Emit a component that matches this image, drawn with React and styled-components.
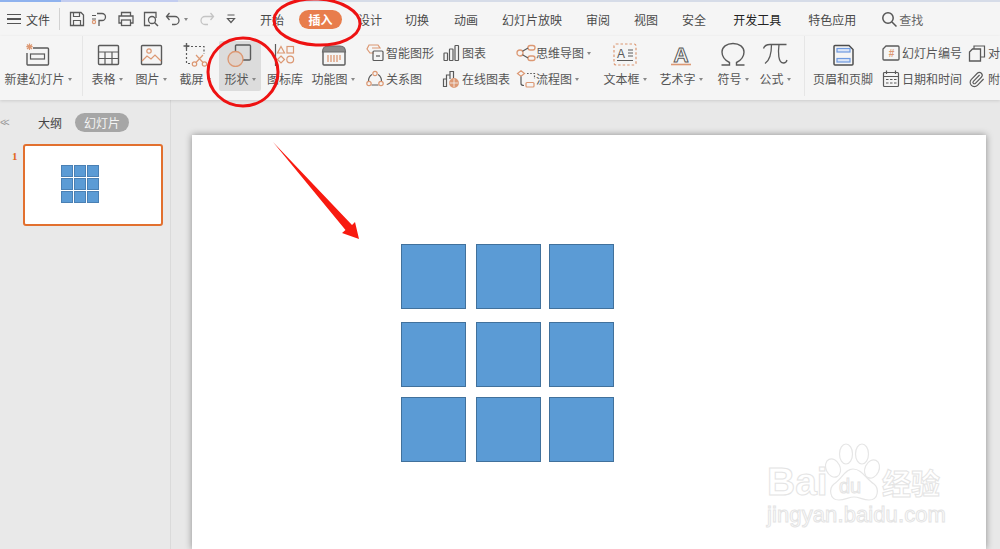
import React from 'react'
import styled, { createGlobalStyle } from 'styled-components'
import { Paperclip } from 'lucide-react'

const G = '#5a5a5a'
const O = '#dc9873'

const GlobalStyle = createGlobalStyle`
  html, body { margin: 0; padding: 0; height: 100%; overflow: hidden; }
  body { font-family: "Noto Sans CJK SC", "Liberation Sans", sans-serif; background: #e8e8e8; }
`

function Svg({ w = 28, h = 24, children }) {
  return (
    <svg width={w} height={h} viewBox={`0 0 ${w} ${h}`} fill="none" stroke={G} strokeWidth="1.2">
      {children}
    </svg>
  )
}

const icons = {
  newSlide: (
    <Svg>
      <path d="M9 5H23.5a1 1 0 0 1 1 1V21a1 1 0 0 1-1 1H4a1 1 0 0 1-1-1V10" strokeWidth="1.4" />
      <rect x="6.5" y="11" width="14" height="5" />
      <path d="M5.5 0.5V7M2.3 3.7H8.7M3 1.5L8 6M8 1.5L3 6" stroke={O} />
    </Svg>
  ),
  table: (
    <Svg>
      <rect x="5.5" y="2.5" width="20" height="19" rx="1" strokeWidth="1.4" />
      <path d="M5.5 9H25.5M5.5 15.5H25.5M12 9V21.5M19 9V21.5" />
    </Svg>
  ),
  picture: (
    <Svg>
      <rect x="4.5" y="2.5" width="20" height="19" rx="1" strokeWidth="1.4" />
      <circle cx="12" cy="8" r="2.2" stroke={O} />
      <path d="M5 18L10 13L14 16L18 12L24 18" stroke={O} />
    </Svg>
  ),
  shot: (
    <Svg>
      <path d="M6 3.5H23V11M5.5 6V20.5H11" strokeDasharray="2 2" />
      <path d="M5.5 0V6M2.5 3H8.5" strokeWidth="1.4" />
      <circle cx="13.5" cy="21" r="2.2" stroke={O} />
      <circle cx="23.5" cy="21" r="2.2" stroke={O} />
      <path d="M15 19.5L22 12M22 19.5L15 12" stroke={O} />
    </Svg>
  ),
  shape: (
    <Svg>
      <path d="M9.5 8V3a1 1 0 0 1 1-1H23.5a1 1 0 0 1 1 1V16a1 1 0 0 1-1 1H17" strokeWidth="1.4" />
      <circle cx="9.5" cy="16" r="7.5" fill="#e0d2ca" stroke={O} strokeWidth="1.3" />
    </Svg>
  ),
  iconLib: (
    <Svg>
      <path d="M4.5 1V22.5H7" strokeWidth="1.2" />
      <path d="M10 3.5L13.5 10H6.5Z" stroke={O} />
      <rect x="16" y="3.5" width="6.5" height="6.5" stroke={O} />
      <path d="M10 13L13.5 16.5L10 20L6.5 16.5Z" stroke={O} />
      <circle cx="19.2" cy="16.5" r="3.4" stroke={O} />
    </Svg>
  ),
  funcChart: (
    <Svg>
      <path d="M4 9V21a1 1 0 0 0 1 1H25a1 1 0 0 0 1-1V9" strokeWidth="1.4" />
      <path d="M3.5 9C3.5 5 6 3 9 3H21C24 3 26.5 5 26.5 9Z" fill="#8a8a8a" stroke="#6a6a6a" />
      <path d="M9 12V19M12 12V19M15 12V19M18 12V19M21 12V17" stroke={O} strokeWidth="1.3" />
    </Svg>
  ),
  textBox: (
    <Svg w={24} h={24}>
      <rect x="1" y="1" width="22" height="21" rx="2" stroke={O} strokeDasharray="2.5 2" />
      <text x="4" y="15" fontSize="12" fontFamily="Liberation Sans" fill={G} stroke="none">A</text>
      <path d="M4 17.5H20M15 7H20M15 10H20M15 13H20" strokeWidth="1" />
    </Svg>
  ),
  art: (
    <Svg w={26} h={26}>
      <text x="13" y="20" textAnchor="middle" fontSize="21" fontFamily="Liberation Sans" fontWeight="700" fill="#fafafa" stroke={G} strokeWidth="1">A</text>
      <path d="M3 22.5H23" stroke={O} strokeWidth="1.6" />
    </Svg>
  ),
  omega: (
    <Svg w={26} h={26}>
      <path d="M1.5 23H9.5V20.5C4.5 18 2 14 2 10C2 5 6.5 1.5 13 1.5C19.5 1.5 24 5 24 10C24 14 21.5 18 16.5 20.5V23H24.5" strokeWidth="1.4" />
    </Svg>
  ),
  pi: (
    <Svg w={26} h={26}>
      <path d="M1.5 6.5C2.5 3.5 5 2.5 8 2.5H24.5M9.5 2.5C9.5 10 8.5 18 3 21.5M17 2.5C16 10 16 21 21.5 21C23.5 21 24.5 20 25 18" strokeWidth="1.3" />
    </Svg>
  ),
  headerFooter: (
    <Svg>
      <path d="M6 2.5H20L24 6.5V21a1 1 0 0 1-1 1H6a1 1 0 0 1-1-1V3.5a1 1 0 0 1 1-1Z" strokeWidth="1.5" stroke="#4d4d4d" />
      <rect x="8" y="5.5" width="13" height="3.5" stroke="#6e9ae0" fill="#dce6f7" />
      <rect x="8" y="15.5" width="13" height="3.5" stroke="#6e9ae0" fill="#dce6f7" />
    </Svg>
  ),
  smart: (
    <Svg w={18} h={18}>
      <path d="M8 9H4L1 5L3 1H12L14 4H6" stroke={O} />
      <rect x="7" y="7" width="10" height="9.5" rx="1" />
      <path d="M10 12H14" />
    </Svg>
  ),
  relation: (
    <Svg w={18} h={18}>
      <path d="M6 4.5C3.5 6 2.5 8.5 2.5 11M12 4.5C14.5 6 15.5 8.5 15.5 11M5.5 15H12.5" />
      <circle cx="9" cy="3.5" r="2.2" stroke={O} />
      <circle cx="3" cy="13.5" r="2.2" stroke={O} />
      <circle cx="15" cy="13.5" r="2.2" stroke={O} />
    </Svg>
  ),
  chart: (
    <Svg w={18} h={18}>
      <rect x="2" y="9" width="3.5" height="7.5" rx=".5" />
      <rect x="7.5" y="5" width="3.5" height="11.5" rx=".5" />
      <rect x="13" y="1.5" width="3.5" height="15" rx=".5" />
    </Svg>
  ),
  online: (
    <Svg w={18} h={18}>
      <path d="M1.5 16.5V9H4.5V16.5ZM4.5 16.5V5H8V9M8 5V1.5H11.5V8" />
      <circle cx="12" cy="13" r="4.3" fill={O} stroke={O} />
      <path d="M7.7 13H16.3M12 8.7V17.3" stroke="#f5f5f5" strokeWidth=".8" />
    </Svg>
  ),
  mind: (
    <Svg w={20} h={18}>
      <circle cx="4" cy="9" r="3" stroke={O} strokeWidth="1.3" />
      <rect x="12" y="1.5" width="7" height="4.5" rx="2.2" stroke={O} strokeWidth="1.3" />
      <rect x="12" y="12" width="7" height="4.5" rx="2.2" stroke={O} strokeWidth="1.3" />
      <path d="M6.5 7.2L12 4M6.5 10.8L12 14" />
    </Svg>
  ),
  flow: (
    <Svg w={20} h={18}>
      <path d="M5 0.8L8.5 3.5L5 6.2L1.5 3.5Z" stroke={O} strokeWidth="1.2" />
      <path d="M11 3.5H18.5V9" strokeDasharray="1.6 1.6" />
      <path d="M5 6.5V13.5C5 15 6 15.5 8 15.5" />
      <rect x="10" y="12.5" width="8" height="4.5" rx="1" stroke={O} strokeWidth="1.2" />
    </Svg>
  ),
  number: (
    <Svg w={18} h={18}>
      <path d="M4 2H16a1 1 0 0 1 1 1V15a1 1 0 0 1-1 1H2a1 1 0 0 1-1-1V5Z" strokeWidth="1.3" />
      <text x="9.5" y="13" textAnchor="middle" fontSize="10" fontFamily="Liberation Sans" fontWeight="700" fill={O} stroke="none">#</text>
    </Svg>
  ),
  calendar: (
    <Svg w={18} h={18}>
      <rect x="1.5" y="2.5" width="15" height="14" rx="1" />
      <path d="M1.5 6.5H16.5M4.5 0.5V4M13.5 0.5V4M4 9.5H6.5M8 9.5H10.5M12 9.5H14.5M4 13H6.5M8 13H10.5M12 13H14.5" />
    </Svg>
  ),
  copies: (
    <Svg w={18} h={18}>
      <path d="M6 5V2H16.5V13H12.5" />
      <path d="M1.5 8L4.5 5H12.5V17H1.5Z" strokeWidth="1.3" />
    </Svg>
  ),
}

const quick = [
  { ml: 9, el: <Svg w={16} h={16}><path d="M1.5 1.5H12L14.5 4V14.5H1.5Z" strokeWidth="1.3" /><path d="M4.5 1.5V5.5H10.5V1.5M4.5 14.5V9.5H11.5V14.5" /></Svg> },
  { ml: 6, el: <Svg w={16} h={16}><path d="M6 2.5H11A3.5 3.5 0 0 1 11 9.5H8V15" strokeWidth="1.3" /><path d="M1 4.5H5M1 8H5" /><circle cx="3" cy="11" r="1.6" stroke={O} /></Svg> },
  { ml: 11, el: <Svg w={16} h={16}><path d="M3.5 5V1.5H12.5V5M3.5 12H1V5H15V12H12.5" strokeWidth="1.3" /><rect x="3.5" y="9" width="9" height="5.5" strokeWidth="1.3" /></Svg> },
  { ml: 9, el: <Svg w={16} h={16}><path d="M13 7V1.5H1.5V14.5H7" strokeWidth="1.3" /><circle cx="9" cy="9" r="3.5" strokeWidth="1.3" /><path d="M11.5 11.5L15 15" strokeWidth="1.5" /></Svg> },
  { ml: 6, el: <Svg w={16} h={16}><path d="M4.5 2L1.5 5.5L4.5 9M2 5.5H10A4 4 0 0 1 10 13.5H7" strokeWidth="1.3" /></Svg>, caret: true },
  { ml: 11, el: <Svg w={16} h={16}><g stroke="#c4c4c4"><path d="M11.5 2L14.5 5.5L11.5 9M14 5.5H6A4 4 0 0 0 6 13.5H9" strokeWidth="1.3" /></g></Svg> },
  { ml: 8, el: <Svg w={16} h={16}><path d="M4.5 4H11.5M4.5 7.5H11.5L8 11.5Z" strokeWidth="1.2" /></Svg> },
]

const tabs = [
  { label: '开始', ml: 21 },
  { label: '插入', ml: 15, active: true },
  { label: '设计', ml: 16 },
  { label: '切换', ml: 23 },
  { label: '动画', ml: 25 },
  { label: '幻灯片放映', ml: 24 },
  { label: '审阅', ml: 24 },
  { label: '视图', ml: 24 },
  { label: '安全', ml: 24 },
  { label: '开发工具', ml: 27, strong: true },
  { label: '特色应用', ml: 27 },
]

const squares = [
  [209, 109], [284, 109], [357, 109],
  [209, 187], [284, 187], [357, 187],
  [209, 262], [284, 262], [357, 262],
]

function Big({ icon, label, w, ml, caret, hover }) {
  return (
    <BigButton $w={w} $ml={ml} $hover={hover}>
      <BigIcon>{icons[icon]}</BigIcon>
      <Label>{label}{caret && <Caret />}</Label>
    </BigButton>
  )
}

function Small({ icon, label, caret }) {
  return (
    <SmallRow>
      <SmallIcon>{icon}</SmallIcon>
      <Label>{label}{caret && <Caret />}</Label>
    </SmallRow>
  )
}

export default function App() {
  return (
    <Page>
      <GlobalStyle />
      <TopLine />
      <TabBar>
        <Burger><span /><span /><span /></Burger>
        <FileLabel>文件</FileLabel>
        <BarDivider />
        {quick.map((q, i) => (
          <QuickItem key={i} $ml={q.ml}>{q.el}{q.caret && <Caret />}</QuickItem>
        ))}
        {tabs.map(t => (
          <Tab key={t.label} $ml={t.ml} $active={t.active} $strong={t.strong}>{t.label}</Tab>
        ))}
        <Search>
          <svg width="17" height="17" viewBox="0 0 17 17" fill="none" stroke="#555" strokeWidth="1.5">
            <circle cx="7" cy="7" r="5.2" />
            <path d="M11 11L15.5 15.5" />
          </svg>
          查找
        </Search>
      </TabBar>

      <Ribbon>
        <Big icon="newSlide" label="新建幻灯片" w={76} caret />
        <RibbonDivider $ml={6} />
        <Big icon="table" label="表格" w={44} ml={2} caret />
        <Big icon="picture" label="图片" w={44} caret />
        <Big icon="shot" label="截屏" w={44} caret />
        <Big icon="shape" label="形状" w={42} ml={2} caret hover />
        <Big icon="iconLib" label="图标库" w={48} />
        <Big icon="funcChart" label="功能图" w={48} caret />
        <SmallCol $w={76} $ml={9}>
          <Small icon={icons.smart} label="智能图形" />
          <Small icon={icons.relation} label="关系图" />
        </SmallCol>
        <SmallCol $w={74}>
          <Small icon={icons.chart} label="图表" />
          <Small icon={icons.online} label="在线图表" />
        </SmallCol>
        <SmallCol $w={85}>
          <Small icon={icons.mind} label="思维导图" caret />
          <Small icon={icons.flow} label="流程图" caret />
        </SmallCol>
        <Big icon="textBox" label="文本框" w={48} caret />
        <Big icon="art" label="艺术字" w={64} caret />
        <Big icon="omega" label="符号" w={40} caret />
        <Big icon="pi" label="公式" w={44} caret />
        <RibbonDivider $ml={7} />
        <Big icon="headerFooter" label="页眉和页脚" w={76} />
        <SmallCol $w={86} $ml={1}>
          <Small icon={icons.number} label="幻灯片编号" />
          <Small icon={icons.calendar} label="日期和时间" />
        </SmallCol>
        <SmallCol $w={32}>
          <Small icon={icons.copies} label="对" />
          <Small icon={<Paperclip size={17} color={G} strokeWidth={1.6} />} label="附" />
        </SmallCol>
      </Ribbon>

      <Body>
        <Side>
          <SideTabs>
            <Collapse>&lt;&lt;</Collapse>
            <OutlineTab>大纲</OutlineTab>
            <SlidesTab>幻灯片</SlidesTab>
          </SideTabs>
          <ThumbRow>
            <ThumbNumber>1</ThumbNumber>
            <Thumb>
              <MiniGrid>
                {squares.map((_, i) => <MiniCell key={i} />)}
              </MiniGrid>
            </Thumb>
          </ThumbRow>
        </Side>
        <Canvas>
          <Slide>
            {squares.map(([x, y], i) => <Square key={i} $x={x} $y={y} />)}
          </Slide>
        </Canvas>
      </Body>

      <Watermark>
        <BrandRow>
          <Bai>Bai</Bai>
          <PawWrap>
            <svg width="60" height="62" viewBox="0 0 60 62" fill="#fff" stroke="#e6e6e6" strokeWidth="1.2">
              <ellipse cx="21" cy="12" rx="6.5" ry="10" />
              <ellipse cx="37" cy="12" rx="6.5" ry="10" />
              <ellipse cx="8" cy="26" rx="7" ry="9.5" transform="rotate(-25 8 26)" />
              <ellipse cx="47" cy="27" rx="7" ry="9.5" transform="rotate(25 47 27)" />
              <path d="M28 27C20 27 17 37 9 42C4 46 4 58 14 58C20 58 24 55 29 55C34 55 38 58 44 58C54 58 54 46 49 42C41 37 37 27 28 27Z" />
            </svg>
            <Du>du</Du>
          </PawWrap>
          <Jy>经验</Jy>
        </BrandRow>
        <WmUrl>jingyan.baidu.com</WmUrl>
      </Watermark>

      <Annotations viewBox="0 0 1000 549" fill="none">
        <ellipse cx="317" cy="22" rx="43" ry="23" stroke="#ee1212" strokeWidth="3" transform="rotate(3 317 22)" />
        <ellipse cx="243" cy="72" rx="35" ry="34" stroke="#ee1212" strokeWidth="3" />
        <polygon points="273,142 352,225 355,222 359,239 342,233 345.5,230" fill="#f81a10" />
      </Annotations>
    </Page>
  )
}

const Page = styled.div`
  position: relative;
  width: 1000px;
  height: 549px;
  display: flex;
  flex-direction: column;
  overflow: hidden;
  background: #e8e8e8;
`
const TopLine = styled.div`
  height: 2px;
  background: linear-gradient(to right, #8fb2ee 0, #8fb2ee 61px, #c3cdf0 61px, #c3cdf0 178px, #d6dce8 178px);
`
const TabBar = styled.div`
  height: 34px;
  display: flex;
  align-items: center;
  padding-left: 7px;
  background: #f5f5f5;
  color: #555;
  font-size: 12px;
`
const Burger = styled.div`
  width: 14px;
  display: flex;
  flex-direction: column;
  gap: 3px;
  span {
    height: 1.5px;
    background: #555;
  }
`
const FileLabel = styled.span`
  margin-left: 5px;
  width: 33px;
  color: #444;
`
const BarDivider = styled.div`
  width: 1px;
  height: 22px;
  background: #d2d2d2;
`
const QuickItem = styled.div`
  display: flex;
  align-items: center;
  gap: 3px;
  margin-left: ${p => p.$ml}px;
`
const Tab = styled.div`
  margin-left: ${p => p.$ml}px;
  width: ${p => (p.$active ? '43px' : 'auto')};
  height: ${p => (p.$active ? '19px' : 'auto')};
  line-height: 19px;
  text-align: center;
  border-radius: 10px;
  background: ${p => (p.$active ? '#e87d4c' : 'transparent')};
  color: ${p => (p.$active ? '#fff' : p.$strong ? '#222' : '#4a4a4a')};
  font-weight: ${p => (p.$active ? 700 : 400)};
`
const Search = styled.div`
  margin-left: 25px;
  display: flex;
  align-items: center;
  gap: 1px;
  color: #666;
`
const Ribbon = styled.div`
  height: 64px;
  flex: none;
  display: flex;
  background: #f5f5f5;
  box-shadow: 0 1px 3px rgba(0, 0, 0, 0.12);
  position: relative;
  z-index: 1;
`
const RibbonDivider = styled.div`
  width: 1px;
  height: 60px;
  margin-left: ${p => p.$ml}px;
  background: #e6e6e6;
`
const BigButton = styled.div`
  width: ${p => p.$w}px;
  margin-left: ${p => p.$ml || 0}px;
  height: 48px;
  margin-top: 5px;
  padding-top: 2px;
  display: flex;
  flex-direction: column;
  align-items: center;
  flex: none;
  background: ${p => (p.$hover ? '#dcdcdc' : 'transparent')};
  border-radius: 2px;
`
const BigIcon = styled.div`
  height: 24px;
  display: flex;
  align-items: center;
  margin-bottom: 4px;
`
const Label = styled.div`
  display: flex;
  align-items: center;
  gap: 3px;
  height: 16px;
  font-size: 12px;
  line-height: 16px;
  color: #555;
  white-space: nowrap;
`
const Caret = styled.i`
  width: 0;
  height: 0;
  border-left: 2.5px solid transparent;
  border-right: 2.5px solid transparent;
  border-top: 3px solid #888;
`
const SmallCol = styled.div`
  width: ${p => p.$w}px;
  margin-left: ${p => p.$ml || 0}px;
  padding-top: 4px;
  flex: none;
  white-space: nowrap;
`
const SmallRow = styled.div`
  height: 26px;
  display: flex;
  align-items: center;
`
const SmallIcon = styled.div`
  width: 20px;
  display: flex;
  align-items: center;
`
const Body = styled.div`
  flex: 1;
  display: flex;
  min-height: 0;
`
const Side = styled.div`
  width: 170px;
  flex: none;
  border-right: 1px solid #dadada;
  background: #e9e9e9;
`
const SideTabs = styled.div`
  height: 44px;
  display: flex;
  align-items: center;
  font-size: 12px;
`
const Collapse = styled.span`
  width: 38px;
  color: #999;
  font: 10px "Liberation Sans", sans-serif;
  letter-spacing: -2px;
`
const OutlineTab = styled.span`
  width: 37px;
  color: #444;
`
const SlidesTab = styled.span`
  width: 54px;
  height: 19px;
  line-height: 19px;
  text-align: center;
  border-radius: 10px;
  background: #a6a6a6;
  color: #f4f4f4;
`
const ThumbRow = styled.div`
  display: flex;
`
const ThumbNumber = styled.span`
  width: 23px;
  padding: 6px 0 0 12px;
  box-sizing: border-box;
  color: #e2661c;
  font: 700 11px "Liberation Serif", serif;
`
const Thumb = styled.div`
  width: 140px;
  height: 82px;
  box-sizing: border-box;
  border: 2px solid #e2702f;
  border-radius: 3px;
  background: #fff;
  padding: 19px 0 0 36px;
`
const MiniGrid = styled.div`
  display: grid;
  grid-template-columns: repeat(3, 12px);
  grid-auto-rows: 12px;
  gap: 1px;
`
const MiniCell = styled.div`
  background: #5b9bd5;
  border: 1px solid #4a80b4;
  box-sizing: border-box;
`
const Canvas = styled.div`
  flex: 1;
  display: flex;
  padding: 35px 14px 0 21px;
  background: #e8e8e8;
`
const Slide = styled.div`
  flex: 1;
  position: relative;
  background: #fff;
  box-shadow: 0 0 7px rgba(0, 0, 0, 0.4);
`
const Square = styled.div`
  position: absolute;
  left: ${p => p.$x}px;
  top: ${p => p.$y}px;
  width: 65px;
  height: 65px;
  box-sizing: border-box;
  background: #5b9bd5;
  border: 1px solid #41719c;
`
const Watermark = styled.div`
  position: absolute;
  left: 767px;
  top: 442px;
  width: 190px;
  color: #fff;
  -webkit-text-stroke: 1px #e4e4e4;
  font-family: "Liberation Sans", sans-serif;
`
const BrandRow = styled.div`
  display: flex;
  height: 60px;
`
const Bai = styled.span`
  font-size: 39px;
  font-weight: 700;
  line-height: 30px;
  margin-top: 25px;
  width: 58px;
`
const PawWrap = styled.div`
  position: relative;
  width: 57px;
  -webkit-text-stroke: 1px #e4e4e4;
`
const Du = styled.span`
  position: absolute;
  left: 14px;
  top: 32px;
  font-size: 20px;
  font-weight: 400;
  line-height: 24px;
`
const Jy = styled.span`
  font: 700 29px/30px "Noto Sans CJK SC", sans-serif;
  margin-top: 25px;
  white-space: nowrap;
`
const WmUrl = styled.div`
  font-size: 22px;
  line-height: 26px;
  letter-spacing: 0.1px;
  white-space: nowrap;
`
const Annotations = styled.svg`
  position: absolute;
  inset: 0;
  width: 1000px;
  height: 549px;
  z-index: 2;
  pointer-events: none;
`
